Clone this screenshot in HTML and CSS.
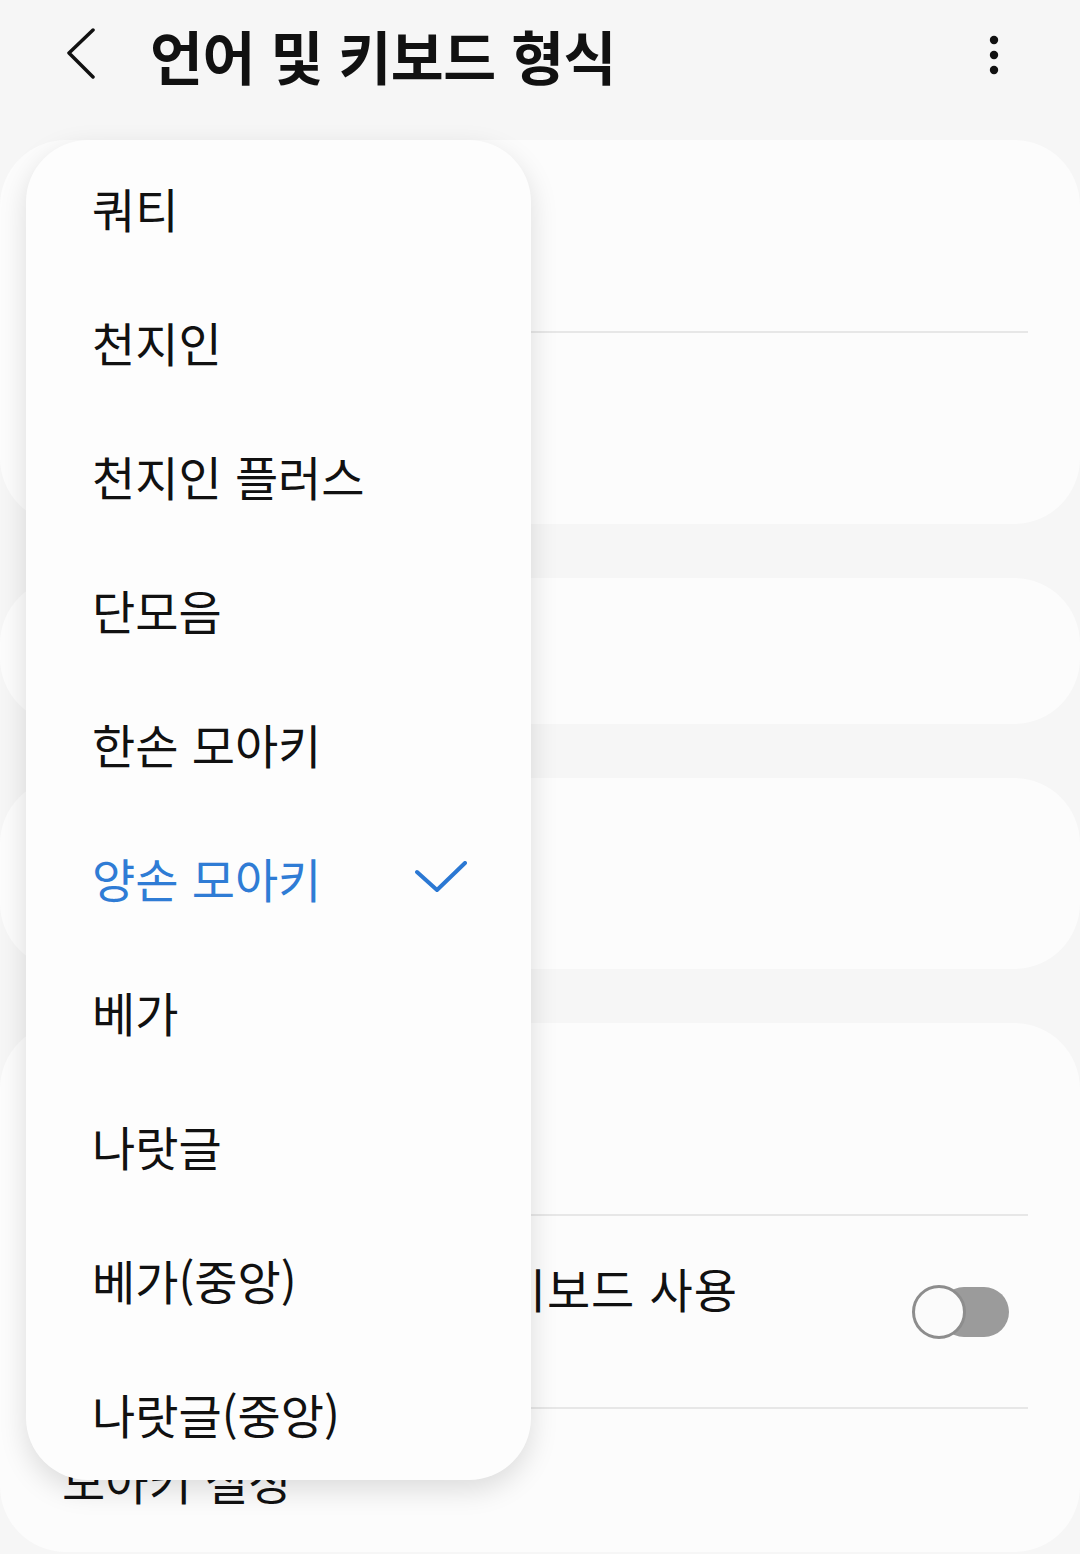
FILE: index.html
```html
<!DOCTYPE html>
<html lang="ko">
<head>
  <meta charset="UTF-8">
  <title>언어 및 키보드 형식</title>
  <link rel="stylesheet" href="styles.css">
</head>
<body>

  <header class="app-bar">
    <svg class="back" width="48" height="56" viewBox="0 0 48 56">
      <path d="M31 2 L7 25 L31 49" fill="none" stroke="#111" stroke-width="3.5" stroke-linecap="round" stroke-linejoin="round"/>
    </svg>
    <h1>언어 및 키보드 형식</h1>
    <svg class="more" width="24" height="56" viewBox="0 0 24 56">
      <circle cx="12" cy="12" r="4.2" fill="#111"/>
      <circle cx="12" cy="27" r="4.2" fill="#111"/>
      <circle cx="12" cy="42" r="4.2" fill="#111"/>
    </svg>
  </header>

  <!-- settings list, mostly covered by the open popup -->
  <main class="list">
    <section class="card">
      <div class="row tall"></div>
      <div class="divider"></div>
      <div class="row tall"></div>
    </section>

    <section class="card">
      <div class="row short"></div>
    </section>

    <section class="card">
      <div class="row mid"></div>
    </section>

    <section class="card">
      <div class="row tall"></div>
      <div class="divider"></div>
      <div class="row tall">
        <div class="title wide">가로 화면에서는 쿼티 키보드 사용</div>
        <div class="switch">
          <span class="track"></span>
          <span class="knob"></span>
        </div>
      </div>
      <div class="divider"></div>
      <div class="row last">
        <div class="title">모아키 설정</div>
      </div>
    </section>
  </main>

  <ul class="popup">
    <li>쿼티</li>
    <li>천지인</li>
    <li>천지인 플러스</li>
    <li>단모음</li>
    <li>한손 모아키</li>
    <li class="selected">
      양손 모아키
      <svg width="52" height="32" viewBox="0 0 52 32">
        <path d="M2 11 L22 29 L50 2" fill="none" stroke="#2b78d3" stroke-width="4" stroke-linecap="round" stroke-linejoin="round"/>
      </svg>
    </li>
    <li>베가</li>
    <li>나랏글</li>
    <li>베가(중앙)</li>
    <li>나랏글(중앙)</li>
  </ul>

</body>
</html>
```

FILE: styles.css
```css
body {
  margin: 0;
  width: 1080px;
  height: 1554px;
  overflow: hidden;
  position: relative;
  background-color: #f6f6f6;
  font-family: "Noto Sans CJK KR", "Noto Sans", sans-serif;
  color: #111;
}
.app-bar {
  display: flex;
  align-items: center;
  height: 112px;
  padding: 0 74px 0 62px;
  margin-bottom: 28px;
}
.app-bar h1 {
  margin: 0 0 0 40px;
  font-size: 57.5px;
  font-weight: 700;
  line-height: 1;
  letter-spacing: -0.5px;
}
.app-bar .more {
  margin-left: auto;
}
.list {
  display: flex;
  flex-direction: column;
  gap: 54px;
}
.card {
  background-color: #fcfcfc;
  border-radius: 66px;
}
.row {
  display: flex;
  align-items: center;
  padding: 0 52px 0 62px;
}
.row.tall {
  height: 191px;
}
.row.short {
  height: 146px;
}
.row.mid {
  height: 191px;
}
.row.last {
  height: 143px;
}
.title {
  font-size: 47px;
  line-height: 1.2;
}
.title.wide {
  letter-spacing: 1px;
  margin-bottom: 46px;
}
.divider {
  height: 2px;
  background-color: #e7e7e7;
  margin: 0 52px 0 62px;
}
.switch {
  position: relative;
  flex: none;
  width: 97px;
  height: 54px;
  margin-left: auto;
  margin-right: 19px;
}
.track {
  position: absolute;
  left: 27px;
  right: 0;
  top: 2px;
  height: 50px;
  border-radius: 25px;
  background-color: #9b9b9b;
}
.knob {
  position: absolute;
  left: 0;
  top: 0;
  width: 48px;
  height: 48px;
  border: 3px solid #8d8d8d;
  border-radius: 50%;
  background-color: #fbfbfb;
}
.popup {
  position: absolute;
  left: 26px;
  top: 140px;
  width: 505px;
  margin: 0;
  padding: 0;
  list-style: none;
  background-color: #fdfdfd;
  border-radius: 62px;
  box-shadow: 0 10px 28px rgba(0, 0, 0, 0.13);
}
.popup li {
  display: flex;
  align-items: center;
  justify-content: space-between;
  height: 134px;
  padding: 0 64px 0 66px;
  font-size: 47px;
  line-height: 1;
}
.popup li.selected {
  color: #2f7cd5;
}
```
